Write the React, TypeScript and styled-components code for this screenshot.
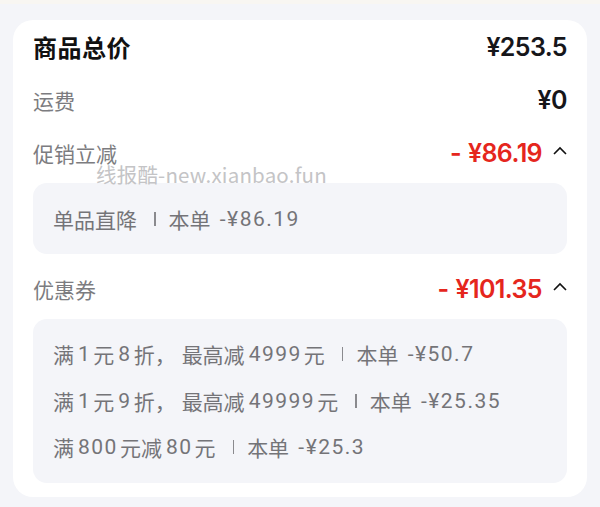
import React from "react";
import styled, { createGlobalStyle } from "styled-components";

const Global = createGlobalStyle`
  html, body { margin: 0; padding: 0; background: #f4f5f9; }
  body { font-family: "Noto Sans CJK SC", "Noto Sans", sans-serif; }
`;

const Page = styled.div`
  width: 600px;
  height: 507px;
  background: #f4f5f9;
  display: flex;
  flex-direction: column;
  overflow: hidden;
`;

const TopStrip = styled.div`
  height: 4px;
  background: #f8f6f2;
`;

const Card = styled.div`
  position: relative;
  margin: 16px 13px 0;
  background: #ffffff;
  border-radius: 20px;
  padding: 0 20px 14px;
  display: flex;
  flex-direction: column;
`;

const Row = styled.div<{ $mt?: number }>`
  height: 53px;
  margin-top: ${(p) => p.$mt ?? 0}px;
  display: flex;
  align-items: center;
  justify-content: space-between;
`;

const Title = styled.span`
  font-size: 24px;
  font-weight: 700;
  letter-spacing: 0.5px;
  color: #111;
`;

const Label = styled.span`
  font-size: 21px;
  color: #7c7c80;
`;

const Amount = styled.span<{ $red?: boolean }>`
  font-family: "Inter", "Noto Sans", sans-serif;
  font-size: 25px;
  font-weight: 600;
  letter-spacing: -0.6px;
  color: ${(p) => (p.$red ? "#e5261d" : "#16161a")};
  display: flex;
  align-items: center;
`;

const Minus = styled.span`
  margin-right: 7px;
`;

const Right = styled.div`
  display: flex;
  align-items: center;
  gap: 11px;
`;

const Chevron = () => (
  <svg width="14" height="14" viewBox="0 0 14 14" style={{ marginTop: -4 }}>
    <path d="M1 10 L7 4 L13 10" fill="none" stroke="#111" strokeWidth="1.6" />
  </svg>
);

const Box = styled.div<{ $mt?: number }>`
  margin-top: ${(p) => p.$mt ?? 4}px;
  background: #f4f5f9;
  border-radius: 14px;
  padding: 12px 20px;
  display: flex;
  flex-direction: column;
  justify-content: center;
  min-height: 47px;
`;

const Line = styled.div`
  height: 46.5px;
  display: flex;
  align-items: center;
  font-family: "Roboto", "Noto Sans CJK SC", sans-serif;
  font-size: 21px;
  color: #747478;
  white-space: pre;
`;

const Num = styled.span`
  letter-spacing: 1.5px;
  margin: 0 2px 0 4px;
`;

const Punct = styled.span`
  margin-right: 6px;
`;

const Sep = styled.span`
  display: inline-block;
  width: 1.6px;
  height: 14px;
  background: #8a8a8e;
  margin: 0 13px 0 17px;
`;

const Watermark = styled.div`
  position: absolute;
  left: 83px;
  top: 139px;
  font-family: "Noto Sans CJK SC", "Noto Sans", sans-serif;
  font-size: 20.5px;
  color: #c4c4c6;
  letter-spacing: 0.2px;
  pointer-events: none;
`;

function Mixed({ text }: { text: string }) {
  const parts = text.split(/([0-9.¥\-]+|，)/).filter((s) => s.length > 0);
  return (
    <>
      {parts.map((p, i) =>
        p === "，" ? (
          <Punct key={i}>{p}</Punct>
        ) : /^[0-9.¥\-]+$/.test(p) ? (
          <Num key={i}>{p}</Num>
        ) : (
          <React.Fragment key={i}>{p}</React.Fragment>
        )
      )}
    </>
  );
}

const promos: [string, string][] = [["单品直降", "本单 -¥86.19"]];

const coupons: [string, string][] = [
  ["满1元8折，最高减4999元", "本单 -¥50.7"],
  ["满1元9折，最高减49999元", "本单 -¥25.35"],
  ["满800元减80元", "本单 -¥25.3"],
];

export default function App() {
  return (
    <Page>
      <Global />
      <TopStrip />
      <Card>
        <Row>
          <Title>商品总价</Title>
          <Amount>¥253.5</Amount>
        </Row>
        <Row>
          <Label>运费</Label>
          <Amount>¥0</Amount>
        </Row>
        <Row>
          <Label>促销立减</Label>
          <Right>
            <Amount $red>
              <Minus>-</Minus>¥86.19
            </Amount>
            <Chevron />
          </Right>
        </Row>
        <Box>
          {promos.map(([a, b]) => (
            <Line key={a}>
              <Mixed text={a} />
              <Sep />
              <Mixed text={b} />
            </Line>
          ))}
        </Box>
        <Row $mt={8}>
          <Label>优惠券</Label>
          <Right>
            <Amount $red>
              <Minus>-</Minus>¥101.35
            </Amount>
            <Chevron />
          </Right>
        </Row>
        <Box $mt={4}>
          {coupons.map(([a, b]) => (
            <Line key={a}>
              <Mixed text={a} />
              <Sep />
              <Mixed text={b} />
            </Line>
          ))}
        </Box>
        <Watermark>线报酷-new.xianbao.fun</Watermark>
      </Card>
    </Page>
  );
}
